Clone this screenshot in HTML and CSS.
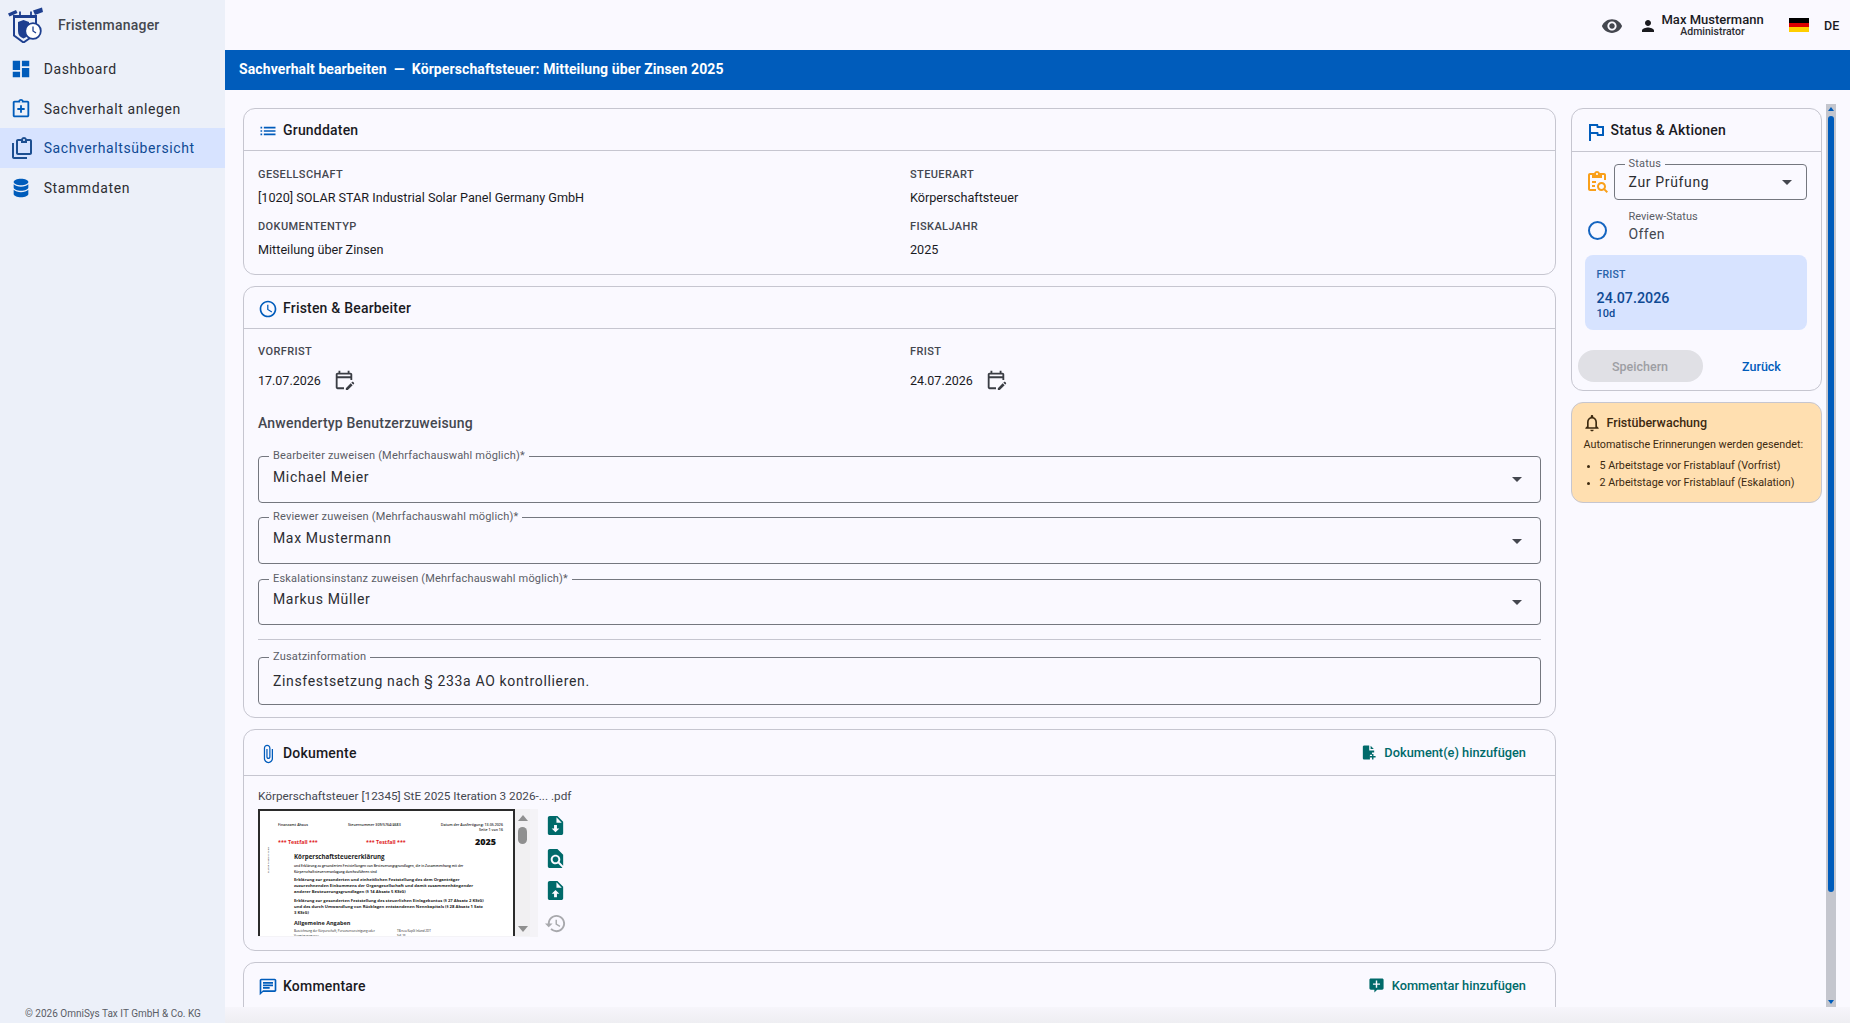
FILE: index.html
```html
<!DOCTYPE html>
<html lang="de">
<head>
  <meta charset="UTF-8" />
  <title>Fristenmanager</title>
  <link rel="stylesheet" href="styles.css">
</head>
<body>
<div class="app">
  <aside class="sidebar">
    <div class="brand">
      <svg class="brand-logo" viewBox="0 0 36 36" fill="none">
        <path d="M7 9H29V18" stroke="#1e3f8f" stroke-width="2"/>
        <path d="M6 8h24v3H6z" fill="#1e3f8f"/>
        <path d="M7 10V28.500L16.500 35.500 23 31" stroke="#1e3f8f" stroke-width="2"/>
        <path d="M1 6.500l8-3.500 1.500 3-8 3.500z" fill="#1e3f8f"/>
        <path d="M26 3.500l9-3 1 4.500-8 3z" fill="#1e3f8f"/>
        <path d="M13 4.500v6M24 4.500v6" stroke="#1e3f8f" stroke-width="1.800"/>
        <path d="M11 15l5.500-2 5.500 2v9a8 8 0 0 1-5.500 7.500A8 8 0 0 1 11 24z" fill="#1e3f8f"/>
        <circle cx="26" cy="24" r="7.800" fill="#fff" stroke="#1e3f8f" stroke-width="1.800"/>
        <path d="M26 19.500V24l3 2" stroke="#1e3f8f" stroke-width="1.300"/>
      </svg>
      <span>Fristenmanager</span>
    </div>
    <nav class="nav">
      <a class="nav-item">
        <svg class="nav-icon" viewBox="0 0 24 24"><path d="M3 13h8V3H3v10zm0 8h8v-6H3v6zm10 0h8V11h-8v10zm0-18v6h8V3h-8z"/></svg>
        Dashboard
      </a>
      <a class="nav-item">
        <svg class="nav-icon" viewBox="0 0 24 24"><path d="M19 3h-4.180C14.400 1.840 13.300 1 12 1s-2.400.84-2.820 2H5c-1.100 0-2 .9-2 2v14c0 1.100.9 2 2 2h14c1.100 0 2-.9 2-2V5c0-1.100-.9-2-2-2zm-7 0c.55 0 1 .45 1 1s-.45 1-1 1-1-.45-1-1 .45-1 1-1zm7 16H5V5h14v14z"/><path d="M13 8h-2v3H8v2h3v3h2v-3h3v-2h-3z"/></svg>
        Sachverhalt anlegen
      </a>
      <a class="nav-item active">
        <svg class="nav-icon" viewBox="0 0 24 24"><path d="M20 3h-3.200C16.400 1.800 15.300 1 14 1s-2.400.8-2.800 2H8c-1.100 0-2 .9-2 2v12c0 1.100.9 2 2 2h12c1.100 0 2-.9 2-2V5c0-1.100-.9-2-2-2zm-6 0c.55 0 1 .45 1 1s-.45 1-1 1-1-.45-1-1 .45-1 1-1zm6 14H8V5h3v2h6V5h3v12z"/><path d="M2 7h2v14h13v2H4c-1.100 0-2-.9-2-2z"/></svg>
        Sachverhaltsübersicht
      </a>
      <a class="nav-item">
        <svg class="nav-icon" viewBox="0 0 24 24"><path d="M12 2C7.600 2 4 3.500 4 5.500S7.600 9 12 9s8-1.500 8-3.500S16.400 2 12 2z"/><path d="M4 8v3.500C4 13.500 7.600 15 12 15s8-1.500 8-3.500V8c-1.700 1.500-4.700 2.500-8 2.500S5.700 9.500 4 8z"/><path d="M4 14v4.500C4 20.500 7.600 22 12 22s8-1.500 8-3.500V14c-1.700 1.500-4.700 2.500-8 2.500S5.700 15.500 4 14z"/></svg>
        Stammdaten
      </a>
    </nav>
    <div class="copyright">© 2026 OmniSys Tax IT GmbH &amp; Co. KG</div>
  </aside>

  <div class="main">
    <header class="topbar">
      <svg class="eye" viewBox="0 0 24 24"><path d="M12 4.500C7 4.500 2.730 7.610 1 12c1.730 4.390 6 7.500 11 7.500s9.270-3.110 11-7.500c-1.730-4.390-6-7.500-11-7.500zM12 17c-2.760 0-5-2.240-5-5s2.240-5 5-5 5 2.240 5 5-2.240 5-5 5zm0-8c-1.660 0-3 1.340-3 3s1.340 3 3 3 3-1.340 3-3-1.340-3-3-3z"/></svg>
      <svg class="person" viewBox="0 0 24 24"><path d="M12 12c2.210 0 4-1.790 4-4s-1.790-4-4-4-4 1.790-4 4 1.790 4 4 4zm0 2c-2.670 0-8 1.340-8 4v2h16v-2c0-2.660-5.330-4-8-4z"/></svg>
      <div class="user">
        <div class="user-name">Max Mustermann</div>
        <div class="user-role">Administrator</div>
      </div>
      <div class="flag"><i class="flag-black"></i><i class="flag-red"></i><i class="flag-gold"></i></div>
      <div class="lang">DE</div>
    </header>

    <div class="page-title">Sachverhalt bearbeiten&nbsp; —&nbsp; Körperschaftsteuer: Mitteilung über Zinsen 2025</div>

    <div class="content">
      <div class="left-col">
        <section class="card card-basic">
          <div class="card-head">
            <svg class="head-icon" viewBox="0 0 24 24"><path d="M3 13h2v-2H3v2zm0 4h2v-2H3v2zm0-8h2V7H3v2zm4 4h14v-2H7v2zm0 4h14v-2H7v2zM7 7v2h14V7H7z"/></svg>
            <h2>Grunddaten</h2>
          </div>
          <div class="info-grid">
            <div><div class="info-label">GESELLSCHAFT</div><div class="info-value">[1020] SOLAR STAR Industrial Solar Panel Germany GmbH</div></div>
            <div><div class="info-label">STEUERART</div><div class="info-value">Körperschaftsteuer</div></div>
            <div><div class="info-label">DOKUMENTENTYP</div><div class="info-value">Mitteilung über Zinsen</div></div>
            <div><div class="info-label">FISKALJAHR</div><div class="info-value">2025</div></div>
          </div>
        </section>

        <section class="card card-dates">
          <div class="card-head">
            <svg class="head-icon" viewBox="0 0 24 24"><path d="M11.990 2C6.470 2 2 6.480 2 12s4.470 10 9.990 10C17.520 22 22 17.520 22 12S17.520 2 11.990 2zM12 20c-4.420 0-8-3.580-8-8s3.580-8 8-8 8 3.580 8 8-3.580 8-8 8zm.5-13H11v6l5.250 3.150.75-1.230-4.500-2.670z"/></svg>
            <h2>Fristen &amp; Bearbeiter</h2>
          </div>
          <div class="card-body">
            <div class="date-grid">
              <div>
                <div class="info-label">VORFRIST</div>
                <div class="date-row">17.07.2026
                  <svg class="cal" viewBox="0 0 24 24"><path d="M5 10h14v2h2V6c0-1.100-.9-2-2-2h-1V2h-2v2H8V2H6v2H5c-1.110 0-1.990.9-1.990 2L3 20c0 1.100.89 2 2 2h7v-2H5v-10zm0-4h14v2H5V6zm17.840 10.280-.71.71-2.120-2.120.71-.71c.39-.39 1.020-.39 1.410 0l.71.71c.39.39.39 1.020 0 1.410zm-3.540-.7 2.120 2.120-5.300 5.300H14v-2.120l5.300-5.300z"/></svg>
                </div>
              </div>
              <div>
                <div class="info-label">FRIST</div>
                <div class="date-row">24.07.2026
                  <svg class="cal" viewBox="0 0 24 24"><path d="M5 10h14v2h2V6c0-1.100-.9-2-2-2h-1V2h-2v2H8V2H6v2H5c-1.110 0-1.990.9-1.990 2L3 20c0 1.100.89 2 2 2h7v-2H5v-10zm0-4h14v2H5V6zm17.840 10.280-.71.71-2.120-2.120.71-.71c.39-.39 1.020-.39 1.410 0l.71.71c.39.39.39 1.020 0 1.410zm-3.540-.7 2.120 2.120-5.300 5.300H14v-2.120l5.300-5.300z"/></svg>
                </div>
              </div>
            </div>
            <h3 class="sub-title">Anwendertyp Benutzerzuweisung</h3>
            <div class="field field-select"><label>Bearbeiter zuweisen (Mehrfachauswahl möglich)*</label>Michael Meier<i class="caret"></i></div>
            <div class="field field-select"><label>Reviewer zuweisen (Mehrfachauswahl möglich)*</label>Max Mustermann<i class="caret"></i></div>
            <div class="field field-select"><label>Eskalationsinstanz zuweisen (Mehrfachauswahl möglich)*</label>Markus Müller<i class="caret"></i></div>
            <hr class="divider">
            <div class="field field-note"><label>Zusatzinformation</label>Zinsfestsetzung nach § 233a AO kontrollieren.</div>
          </div>
        </section>

        <section class="card card-docs">
          <div class="card-head card-head-action">
            <svg class="head-icon" viewBox="0 0 24 24"><path d="M16.500 6v11.500c0 2.210-1.790 4-4 4s-4-1.790-4-4V5c0-1.380 1.120-2.500 2.500-2.500s2.500 1.120 2.500 2.500v10.500c0 .55-.45 1-1 1s-1-.45-1-1V6H10v9.500c0 1.380 1.120 2.500 2.500 2.500s2.500-1.120 2.500-2.500V5c0-2.210-1.790-4-4-4S7 2.790 7 5v12.500c0 3.040 2.460 5.500 5.500 5.500s5.500-2.460 5.500-5.500V6h-1.500z"/></svg>
            <h2>Dokumente</h2>
            <a class="action">
              <svg viewBox="0 0 24 24"><path d="M13 2H6c-1.100 0-2 .9-2 2v16c0 1.100.9 2 2 2h8v-3h-0V15h3v-3h3V9h-7zM15 2.500V7h4.500z"/><path d="M19 14v3h3v2h-3v3h-2v-3h-3v-2h3v-3z"/></svg>
              Dokument(e) hinzufügen
            </a>
          </div>
          <div class="docs-body">
            <div class="doc-name">Körperschaftsteuer [12345] StE 2025 Iteration 3 2026-... .pdf</div>
            <div class="doc-row">
              <div class="preview">
                <div class="pdf-page">
                  <div class="pdf-top"><span>Finanzamt Ahaus</span><span>Steuernummer 309/5764/4683</span><span class="pdf-date">Datum der Ausfertigung: 13.05.2026<br>Seite 1 von 16</span></div>
                  <div class="pdf-test"><span>*** Testfall ***</span><span>*** Testfall ***</span><b>2025</b></div>
                  <div class="pdf-text">
                    <div class="pdf-h1">Körperschaftsteuererklärung</div>
                    <p class="pdf-small">und Erklärung zu gesonderten Feststellungen von Besteuerungsgrundlagen, die in Zusammenhang mit der Körperschaftsteuerveranlagung durchzuführen sind</p>
                    <p>Erklärung zur gesonderten und einheitlichen Feststellung des dem Organträger zuzurechnenden Einkommens der Organgesellschaft und damit zusammenhängender anderer Besteuerungsgrundlagen (§ 14 Absatz 5 KStG)</p>
                    <p>Erklärung zur gesonderten Feststellung des steuerlichen Einlagekontos (§ 27 Absatz 2 KStG) und des durch Umwandlung von Rücklagen entstandenen Nennkapitals (§ 28 Absatz 1 Satz 3 KStG)</p>
                    <div class="pdf-h2">Allgemeine Angaben</div>
                    <div class="pdf-last"><span>Bezeichnung der Körperschaft, Personenvereinigung oder Vermögensmasse</span><span>TB neu KapG Inland 2DT<br>StE 26</span></div>
                  </div>
                  <div class="pdf-side">ELSTER Transfer Ticket</div>
                </div>
                <div class="pv-scroll"><i class="pv-up"></i><i class="pv-thumb"></i><i class="pv-down"></i></div>
              </div>
              <div class="doc-tools">
                <svg viewBox="0 0 24 24"><path fill-rule="evenodd" d="M14 2H6c-1.100 0-2 .9-2 2v16c0 1.100.9 2 2 2h12c1.100 0 2-.9 2-2V8zM13 3.500V9h5.500zM12 19l-4-4h2.500v-3.500h3V15H16z"/></svg>
                <svg viewBox="0 0 24 24"><path d="M20 19.590V8l-6-6H6c-1.100 0-1.990.9-1.990 2L4 20c0 1.100.89 2 1.990 2H18c.45 0 .85-.15 1.190-.4l-4.430-4.430c-.8.52-1.740.83-2.760.83-2.760 0-5-2.240-5-5s2.240-5 5-5 5 2.240 5 5c0 1.020-.31 1.960-.83 2.750L20 19.590zM9 13c0 1.660 1.340 3 3 3s3-1.340 3-3-1.340-3-3-3-3 1.340-3 3z"/></svg>
                <svg viewBox="0 0 24 24"><path fill-rule="evenodd" d="M14 2H6c-1.100 0-2 .9-2 2v16c0 1.100.9 2 2 2h12c1.100 0 2-.9 2-2V8zM13 3.500V9h5.500zM12 11.500l4 4h-2.500V19h-3v-3.500H8z"/></svg>
                <svg class="tool-off" viewBox="0 0 24 24"><path d="M13 3c-4.970 0-9 4.030-9 9H1l3.890 3.890.07.14L9 12H6c0-3.870 3.130-7 7-7s7 3.130 7 7-3.130 7-7 7c-1.930 0-3.680-.79-4.940-2.060l-1.420 1.420C8.270 19.990 10.510 21 13 21c4.970 0 9-4.030 9-9s-4.030-9-9-9zm-1 5v5l4.280 2.540.72-1.210-3.500-2.080V8H12z"/></svg>
              </div>
            </div>
          </div>
        </section>

        <section class="card card-comments">
          <div class="card-head card-head-action">
            <svg class="head-icon" viewBox="0 0 24 24"><path d="M20 2H4c-1.100 0-2 .9-2 2v18l4-4h14c1.100 0 2-.9 2-2V4c0-1.100-.9-2-2-2zm0 14H6l-2 2V4h16v12z"/><path d="M6 12h8v2H6zM6 9h12v2H6zM6 6h12v2H6z"/></svg>
            <h2>Kommentare</h2>
            <a class="action">
              <svg viewBox="0 0 24 24"><path d="M22 4c0-1.100-.9-2-2-2H4c-1.100 0-2 .9-2 2v12c0 1.100.9 2 2 2h5v4l4-4h7c1.100 0 2-.9 2-2zm-5 7h-4v4h-2v-4H7V9h4V5h2v4h4z"/></svg>
              Kommentar hinzufügen
            </a>
          </div>
        </section>
      </div>

      <div class="right-col">
        <section class="card card-status">
          <div class="card-head">
            <svg class="head-icon" viewBox="0 0 24 24"><path d="M12.360 6l.4 2H18v6h-3.360l-.4-2H7V6h5.360M14 4H5v17h2v-7h5.600l.4 2h7V6h-5.600L14 4z"/></svg>
            <h2>Status &amp; Aktionen</h2>
          </div>
          <div class="status-body">
            <div class="status-row">
              <svg class="status-icon" viewBox="0 0 24 24"><path d="M5 5h2v3h10V5h2v5h2V5c0-1.100-.9-2-2-2h-4.180C14.400 1.840 13.300 1 12 1S9.600 1.840 9.180 3H5c-1.100 0-2 .9-2 2v14c0 1.100.9 2 2 2h6v-2H5V5zm7-2c.55 0 1 .45 1 1s-.45 1-1 1-1-.45-1-1 .45-1 1-1z"/><path d="M7 11h4v2H7zM7 15h3v2H7z"/><path d="M20.300 18.900c.4-.7.7-1.500.7-2.400 0-2.500-2-4.500-4.500-4.500S12 14 12 16.500s2 4.500 4.500 4.500c.9 0 1.700-.3 2.400-.7l2.700 2.700 1.400-1.400-2.700-2.700zm-3.800.1c-1.400 0-2.500-1.100-2.500-2.500s1.100-2.500 2.500-2.500 2.500 1.100 2.500 2.500-1.100 2.500-2.500 2.500z"/></svg>
              <div class="field field-status"><label>Status</label>Zur Prüfung<i class="caret"></i></div>
            </div>
            <div class="review-row">
              <i class="review-ring"></i>
              <div>
                <div class="review-label">Review-Status</div>
                <div class="review-value">Offen</div>
              </div>
            </div>
            <div class="deadline">
              <div class="deadline-label">FRIST</div>
              <div class="deadline-date">24.07.2026</div>
              <div class="deadline-days">10d</div>
            </div>
            <div class="btn-row">
              <button class="btn-save">Speichern</button>
              <button class="btn-back">Zurück</button>
            </div>
          </div>
        </section>

        <section class="card card-watch">
          <div class="watch-head">
            <svg viewBox="0 0 24 24"><path d="M12 22c1.100 0 2-.9 2-2h-4c0 1.100.9 2 2 2zm6-6v-5c0-3.070-1.630-5.640-4.500-6.320V4c0-.83-.67-1.500-1.500-1.500s-1.500.67-1.500 1.500v.68C7.640 5.360 6 7.920 6 11v5l-2 2v1h16v-1l-2-2zm-2 1H8v-6c0-2.480 1.510-4.500 4-4.500s4 2.020 4 4.500v6z"/></svg>
            <h2>Fristüberwachung</h2>
          </div>
          <p>Automatische Erinnerungen werden gesendet:</p>
          <ul>
            <li>5 Arbeitstage vor Fristablauf (Vorfrist)</li>
            <li>2 Arbeitstage vor Fristablauf (Eskalation)</li>
          </ul>
        </section>
      </div>

      <div class="scrollbar"><i class="sb-up"></i><i class="sb-thumb"></i><i class="sb-down"></i></div>
    </div>
    <div class="bottom-fade"></div>
  </div>
</div>
</body>
</html>
```

FILE: styles.css
```css
:root {
  --bg: #faf9ff;
  --side: #ecf0f9;
  --blue: #005cbb;
  --line: #c6c6d0;
  --text: #1a1b1f;
  --muted: #44474f;
  --teal: #006a6a;
}

* {
  box-sizing: border-box;
  margin: 0;
  padding: 0;
}

html, body {
  height: 100%;
  overflow: hidden;
}

body {
  background: var(--bg);
  color: var(--text);
  font-family: Roboto, "Liberation Sans", sans-serif;
}

.app {
  display: flex;
  height: 1023px;
}

/* sidebar */
.sidebar {
  width: 225px;
  flex: none;
  background: var(--side);
  display: flex;
  flex-direction: column;
}

.brand {
  height: 49px;
  display: flex;
  align-items: center;
  padding-left: 7px;
  color: #44474f;
  font-size: 14px;
  font-weight: 500;
  letter-spacing: 0.2px;
}

.brand-logo {
  width: 36px;
  height: 36px;
  margin-right: 15px;
}

.nav {
  display: flex;
  flex-direction: column;
}

.nav-item {
  height: 39.700px;
  display: flex;
  align-items: center;
  padding-left: 10px;
  gap: 11.700px;
  font-size: 14px;
  letter-spacing: 0.6px;
  color: #2c2d32;
}

.nav-item.active {
  background: #d7e3ff;
  color: #0f4a94;
}

.nav-icon {
  width: 22px;
  height: 22px;
  fill: var(--blue);
  flex: none;
}

.nav-item.active .nav-icon {
  width: 24px;
  height: 24px;
  margin-right: -2px;
  fill: #1d4f91;
}

.copyright {
  margin-top: auto;
  padding: 0 0 2px 25px;
  font-size: 10px;
  line-height: 14px;
  color: #5a5d66;
}

/* main */
.main {
  flex: 1;
  min-width: 0;
  display: flex;
  flex-direction: column;
}

.topbar {
  height: 50px;
  flex: none;
  display: flex;
  align-items: center;
  background: var(--bg);
}

.eye {
  width: 22px;
  height: 22px;
  fill: #44474f;
  margin: 2px 0 0 1376px;
}

.person {
  width: 18px;
  height: 18px;
  fill: #1a1b1f;
  margin: 2px 0 0 16px;
}

.user {
  width: 102px;
  margin-left: 4.500px;
  text-align: center;
  white-space: nowrap;
}

.user-name {
  font-size: 13px;
  font-weight: 500;
  line-height: 13px;
}

.user-role {
  font-size: 10.500px;
  font-weight: 500;
  line-height: 12px;
  color: #2c2d32;
}

.flag {
  width: 20px;
  height: 14px;
  margin-left: 25.500px;
  display: flex;
  flex-direction: column;
}

.flag i {
  flex: 1;
}

.flag-black { background: #000; }
.flag-red { background: #d00; }
.flag-gold { background: #ffce00; }

.lang {
  margin-left: 15px;
  font-size: 12.500px;
  font-weight: 500;
}

.page-title {
  height: 40px;
  flex: none;
  background: var(--blue);
  color: #fff;
  padding: 0 0 0 14px;
  font-size: 14px;
  font-weight: 700;
  line-height: 39px;
  letter-spacing: 0.1px;
}

.content {
  height: 917px;
  flex: none;
  display: flex;
  overflow: hidden;
  padding: 18px 0 0 18px;
}

.left-col {
  width: 1313px;
  flex: none;
  display: flex;
  flex-direction: column;
  gap: 11px;
}

.right-col {
  width: 251px;
  flex: none;
  margin-left: 14.500px;
  display: flex;
  flex-direction: column;
  gap: 11px;
}

.card {
  border: 1px solid var(--line);
  border-radius: 12px;
  flex: none;
}

.card-basic { height: 167px; }
.card-dates { height: 432px; }
.card-docs { height: 222px; }
.card-comments { height: 200px; }

.card-head {
  height: 42px;
  display: flex;
  align-items: center;
  padding-left: 14px;
  border-bottom: 1px solid var(--line);
}

.card-docs .card-head,
.card-comments .card-head {
  height: 46px;
}

.card-head h2 {
  font-size: 14px;
  font-weight: 500;
  letter-spacing: 0.2px;
}

.head-icon {
  width: 20px;
  height: 20px;
  fill: var(--blue);
  margin: 3px 5px 0 0;
  flex: none;
}

.info-grid, .date-grid {
  display: grid;
  grid-template-columns: 652px 1fr;
}

.info-grid {
  padding: 17px 14px 0;
  row-gap: 15px;
}

.info-label {
  font-size: 11px;
  font-weight: 500;
  line-height: 14px;
  letter-spacing: 0.4px;
  color: #44474f;
}

.info-value {
  margin-top: 8px;
  font-size: 12.650px;
  line-height: 15px;
  color: var(--text);
}

.card-body {
  padding: 16px 14px 0;
}

.date-row {
  margin-top: 9px;
  display: flex;
  align-items: center;
  height: 24px;
  font-size: 12.500px;
}

.cal {
  width: 22px;
  height: 22px;
  fill: #3a3d44;
  margin-left: 12px;
}

.sub-title {
  margin-top: 23px;
  font-size: 14px;
  font-weight: 500;
  line-height: 16px;
  color: #44474f;
  letter-spacing: 0.2px;
}

.field {
  position: relative;
  border: 1px solid #74777f;
  border-radius: 4px;
  padding-left: 14px;
  font-size: 14px;
  letter-spacing: 0.65px;
  color: #2c2d32;
  display: flex;
  align-items: center;
}

.field label {
  position: absolute;
  top: -8px;
  left: 10px;
  padding: 0 4px;
  background: var(--bg);
  font-size: 11px;
  line-height: 14px;
  letter-spacing: 0.18px;
  color: #5a5d66;
  white-space: nowrap;
}

.field-select {
  height: 46.500px;
  margin-top: 14.800px;
  padding-bottom: 5px;
}

.sub-title + .field-select {
  margin-top: 25px;
}

.divider {
  border: 0;
  border-top: 1px solid var(--line);
  margin: 14px 0 17px;
}

.field-note {
  height: 48px;
}

.caret {
  position: absolute;
  right: 18px;
  top: 50%;
  margin-top: -2px;
  border-left: 5px solid transparent;
  border-right: 5px solid transparent;
  border-top: 5px solid #44474f;
}

.card-head-action {
  padding-right: 29px;
}

.action {
  margin-left: auto;
  display: flex;
  align-items: center;
  gap: 7px;
  font-size: 12.800px;
  font-weight: 500;
  color: var(--teal);
}

.action svg {
  width: 17px;
  height: 17px;
  fill: var(--teal);
}

.docs-body {
  padding: 13px 14px 0;
}

.doc-name {
  font-size: 11.750px;
  line-height: 15px;
  color: #44474f;
}

.doc-row {
  display: flex;
  margin-top: 5px;
}

.preview {
  width: 280px;
  height: 128px;
  display: flex;
  background: #f4f3f7;
}

.pdf-page {
  position: relative;
  width: 257px;
  height: 127px;
  overflow: hidden;
  background: #fff;
  border: 2px solid #2b2b2b;
  border-bottom: 0;
  color: #222;
  font-family: "Open Sans", "Liberation Sans", sans-serif;
  font-size: 4px;
  padding: 11px 10px 0 18px;
}

.pdf-top {
  display: flex;
  justify-content: space-between;
  font-size: 3.600px;
  font-weight: 600;
  line-height: 5px;
}

.pdf-date {
  text-align: right;
}

.pdf-test {
  display: flex;
  align-items: center;
  margin-top: 3px;
  color: #e01b1b;
  font-size: 5.300px;
  font-weight: 700;
}

.pdf-test span:first-child {
  width: 88px;
}

.pdf-test span + span {
  width: 109px;
}

.pdf-test b {
  color: #111;
  font-size: 9px;
}

.pdf-text {
  padding: 4px 0 0 16px;
  width: 206px;
}

.pdf-h1 {
  font-size: 6.200px;
  font-weight: 700;
  line-height: 9px;
  margin-bottom: 2px;
}

.pdf-text p {
  font-size: 4.200px;
  font-weight: 700;
  line-height: 6px;
  margin-bottom: 3px;
}

.pdf-text .pdf-small {
  font-size: 3.300px;
  font-weight: 600;
  line-height: 5.500px;
}

.pdf-h2 {
  font-size: 5.500px;
  font-weight: 700;
  line-height: 8px;
  margin-top: 3px;
}

.pdf-last {
  display: flex;
  gap: 8px;
  margin-top: 2px;
  font-size: 3px;
  line-height: 5px;
}

.pdf-last span:first-child {
  width: 95px;
}

.pdf-side {
  position: absolute;
  left: 6px;
  top: 62px;
  font-size: 2.500px;
  transform: rotate(-90deg);
  transform-origin: left top;
  white-space: nowrap;
}

.pv-scroll {
  width: 15px;
  height: 127px;
  background: #f1f0f2;
  display: flex;
  flex-direction: column;
  align-items: center;
  padding-top: 6px;
}

.pv-up {
  border-left: 5px solid transparent;
  border-right: 5px solid transparent;
  border-bottom: 6px solid #8f8f8f;
}

.pv-thumb {
  width: 9px;
  height: 17px;
  margin-top: 6px;
  border-radius: 5px;
  background: #8f8f8f;
}

.pv-down {
  margin-top: auto;
  margin-bottom: 4px;
  border-left: 5px solid transparent;
  border-right: 5px solid transparent;
  border-top: 6px solid #8f8f8f;
}

.doc-tools {
  margin: 5px 0 0 5.500px;
  display: flex;
  flex-direction: column;
  gap: 9.500px;
}

.doc-tools svg {
  display: block;
  width: 23px;
  height: 23px;
  fill: var(--teal);
}

.doc-tools .tool-off {
  fill: #a8a9ad;
}

/* right column */
.card-status {
  height: 283px;
}

.card-status .card-head {
  height: 43px;
  padding-left: 12px;
}

.card-status .head-icon {
  width: 24px;
  height: 24px;
  margin-right: 3px;
}

.status-body {
  padding: 12px 14px 0 13px;
}

.status-row {
  display: flex;
  align-items: center;
}

.status-icon {
  width: 24px;
  height: 24px;
  fill: #f9a01b;
  flex: none;
  margin-right: 5px;
}

.field-status {
  flex: 1;
  height: 36px;
  padding-left: 14px;
}

.field-status .caret {
  right: 14px;
}

.review-row {
  display: flex;
  align-items: center;
  margin-top: 10px;
  gap: 22px;
  padding-left: 3px;
}

.review-ring {
  width: 19px;
  height: 19px;
  margin-top: 7px;
  border: 2px solid #1565c0;
  border-radius: 50%;
}

.review-label {
  font-size: 11px;
  line-height: 14px;
  color: #5a5d66;
}

.review-value {
  margin-top: 1px;
  font-size: 14px;
  line-height: 18px;
  letter-spacing: 0.4px;
  color: #44474f;
}

.deadline {
  margin-top: 12px;
  height: 75px;
  background: #d7e3ff;
  border-radius: 8px;
  padding: 13px 12px;
  color: #0f4a94;
}

.deadline-label {
  font-size: 10.500px;
  font-weight: 500;
  line-height: 14px;
  letter-spacing: 0.2px;
  color: #2962a8;
}

.deadline-date {
  margin-top: 8px;
  font-size: 14.300px;
  font-weight: 500;
  line-height: 17px;
}

.deadline-days {
  font-size: 11px;
  font-weight: 500;
  line-height: 14px;
}

.btn-row {
  display: flex;
  align-items: center;
  margin: 20px -14px 0 -7px;
}

.btn-row button {
  border: 0;
  font-family: inherit;
  font-size: 12.500px;
  font-weight: 500;
  background: none;
  height: 32px;
}

.btn-row .btn-save {
  width: 125px;
  border-radius: 16px;
  color: #9d9ea3;
  background: #e0e0e5;
}

.btn-back {
  flex: 1;
  color: var(--blue);
}

.card-watch {
  height: 101px;
  background: #ffdfb0;
  padding: 10px 12px 0;
  color: #3d2a10;
}

.watch-head {
  display: flex;
  align-items: center;
  gap: 5px;
}

.watch-head svg {
  width: 20px;
  height: 20px;
  margin-left: -2px;
  fill: #3d2a10;
}

.watch-head h2 {
  font-size: 12.500px;
  font-weight: 500;
  line-height: 16px;
}

.card-watch p {
  margin-top: 5px;
  font-size: 10.750px;
  line-height: 14px;
}

.card-watch ul {
  margin-top: 5px;
  padding-left: 16px;
  font-size: 10.750px;
  line-height: 17px;
}

.scrollbar {
  width: 10px;
  height: 903px;
  flex: none;
  margin: -4px 0 0 4px;
  background: #c4c6ce;
  display: flex;
  flex-direction: column;
  align-items: center;
  padding-top: 3px;
}

.sb-up {
  border-left: 3px solid transparent;
  border-right: 3px solid transparent;
  border-bottom: 4px solid var(--blue);
}

.sb-thumb {
  width: 6px;
  height: 776px;
  margin-top: 5px;
  background: var(--blue);
  border-radius: 3px;
}

.sb-down {
  margin-top: auto;
  margin-bottom: 3px;
  border-left: 3px solid transparent;
  border-right: 3px solid transparent;
  border-top: 4px solid var(--blue);
}

.bottom-fade {
  height: 16px;
  flex: none;
  background: linear-gradient(#f6f5fb, #eeeef2);
}
```
